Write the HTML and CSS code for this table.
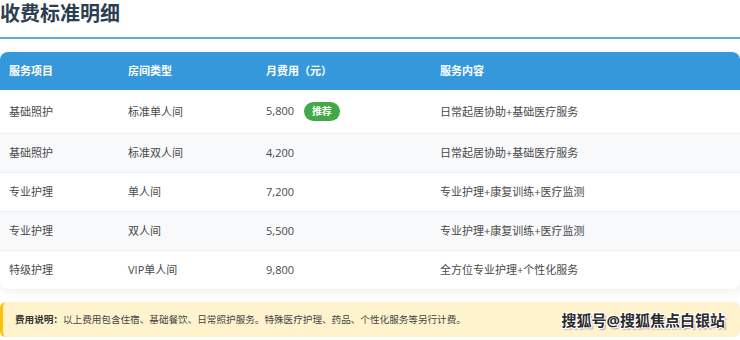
FILE: index.html
```html
<!DOCTYPE html>
<html lang="zh-CN">
<head>
    <meta charset="UTF-8">
    <meta name="viewport" content="width=device-width, initial-scale=1.0">
    <title>收费标准明细</title>
    <link rel="stylesheet" href="styles.css">
</head>
<body>
    <div class="page">
        <h2 class="section-title">收费标准明细</h2>

        <div class="table-wrap">
            <table class="fee-table">
                <thead>
                    <tr>
                        <th class="col-item">服务项目</th>
                        <th class="col-room">房间类型</th>
                        <th class="col-price">月费用（元）</th>
                        <th>服务内容</th>
                    </tr>
                </thead>
                <tbody>
                    <tr>
                        <td>基础照护</td>
                        <td>标准单人间</td>
                        <td>5,800 <span class="badge">推荐</span></td>
                        <td>日常起居协助+基础医疗服务</td>
                    </tr>
                    <tr>
                        <td>基础照护</td>
                        <td>标准双人间</td>
                        <td>4,200</td>
                        <td>日常起居协助+基础医疗服务</td>
                    </tr>
                    <tr>
                        <td>专业护理</td>
                        <td>单人间</td>
                        <td>7,200</td>
                        <td>专业护理+康复训练+医疗监测</td>
                    </tr>
                    <tr>
                        <td>专业护理</td>
                        <td>双人间</td>
                        <td>5,500</td>
                        <td>专业护理+康复训练+医疗监测</td>
                    </tr>
                    <tr>
                        <td>特级护理</td>
                        <td>VIP单人间</td>
                        <td>9,800</td>
                        <td>全方位专业护理+个性化服务</td>
                    </tr>
                </tbody>
            </table>
        </div>

        <div class="note">
            <strong>费用说明：</strong>以上费用包含住宿、基础餐饮、日常照护服务。特殊医疗护理、药品、个性化服务等另行计费。
            <span class="watermark">搜狐号@搜狐焦点白银站</span>
        </div>
    </div>
</body>
</html>
```

FILE: styles.css
```css
body {
    margin: 0;
    padding: 0;
    background-color: #fff;
    font-family: "Open Sans", "Noto Sans CJK SC", sans-serif;
    color: #444;
}
.page {
    width: 740px;
    height: 340px;
    overflow: hidden;
}
.section-title {
    margin: 0;
    font-size: 20px;
    line-height: 28px;
    font-weight: bold;
    color: #2c3e50;
    padding-bottom: 9px;
    border-bottom: 2px solid #5dade2;
}
.table-wrap {
    margin-top: 13px;
    border-radius: 8px;
    overflow: hidden;
    box-shadow: 0 2px 10px rgba(0, 0, 0, 0.08);
}
.fee-table {
    width: 100%;
    border-collapse: collapse;
    font-size: 11px;
    line-height: 14px;
}
.fee-table th {
    background-color: #3498db;
    color: #fff;
    font-weight: bold;
    text-align: left;
    padding: 12px 9px;
}
.col-item { width: 101px; }
.col-room { width: 120px; }
.col-price { width: 156px; }
.fee-table td {
    padding: 12px 9px;
    color: #4a4a4a;
    border-bottom: 1px solid #eef0f2;
    vertical-align: middle;
}
.fee-table tbody tr:nth-child(even) {
    background-color: #f8f9fa;
}
.fee-table tbody tr:last-child td {
    border-bottom: none;
}
.badge {
    display: inline-block;
    margin-left: 7px;
    padding: 2px 8px;
    border-radius: 10px;
    background-color: #43a847;
    color: #fff;
    font-size: 10px;
    font-weight: bold;
    line-height: 15px;
}
.note {
    position: relative;
    margin-top: 13px;
    padding: 12px 12px;
    background-color: #fff3cd;
    border-left: 3px solid #ffc107;
    border-radius: 6px;
    font-size: 9.6px;
    line-height: 11px;
    color: #444;
}
.note strong {
    color: #333;
}
.watermark {
    position: absolute;
    right: 15px;
    top: 8px;
    font-size: 15px;
    font-weight: bold;
    line-height: 20px;
    color: #2b2b2b;
    text-shadow: 1px 1px 0 #fff, -1px -1px 0 #fff, 1px -1px 0 #fff, -1px 1px 0 #fff, 2px 2px 1px #aaa;
}
```
